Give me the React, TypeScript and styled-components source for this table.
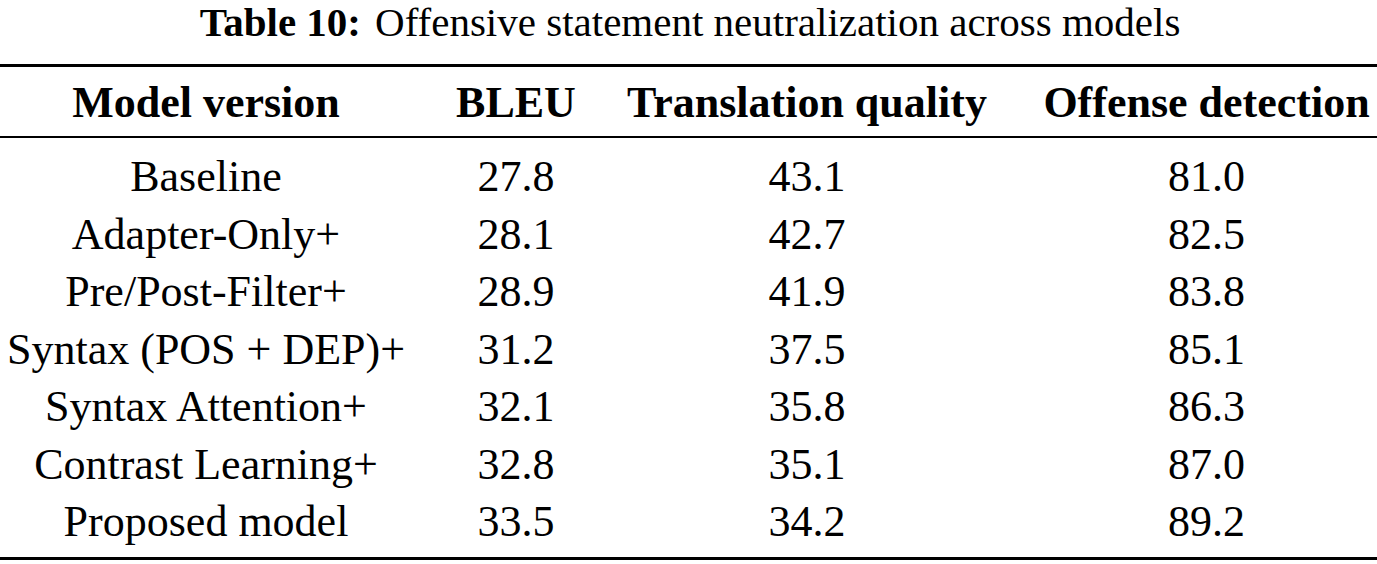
import React from 'react';
import styled, { createGlobalStyle } from 'styled-components';

interface Row {
  model: string;
  bleu: string;
  quality: string;
  offense: string;
}

const rows: Row[] = [
  { model: 'Baseline', bleu: '27.8', quality: '43.1', offense: '81.0' },
  { model: 'Adapter-Only+', bleu: '28.1', quality: '42.7', offense: '82.5' },
  { model: 'Pre/Post-Filter+', bleu: '28.9', quality: '41.9', offense: '83.8' },
  { model: 'Syntax (POS + DEP)+', bleu: '31.2', quality: '37.5', offense: '85.1' },
  { model: 'Syntax Attention+', bleu: '32.1', quality: '35.8', offense: '86.3' },
  { model: 'Contrast Learning+', bleu: '32.8', quality: '35.1', offense: '87.0' },
  { model: 'Proposed model', bleu: '33.5', quality: '34.2', offense: '89.2' },
];

const headers = ['Model version', 'BLEU', 'Translation quality', 'Offense detection'];

function App() {
  return (
    <>
      <GlobalStyle />
      <Page>
        <Caption>
          <CaptionLabel>Table 10:</CaptionLabel>
          <span>Offensive statement neutralization across models</span>
        </Caption>
        <Rule $weight={3} />
        <HeadRow>
          {headers.map((h, i) => (
            <HeadCell key={h} $col={i}>
              {h}
            </HeadCell>
          ))}
        </HeadRow>
        <Rule $weight={2} />
        <Body>
          {rows.map((r) => (
            <BodyRow key={r.model}>
              <Cell $col={0}>{r.model}</Cell>
              <Cell $col={1}>{r.bleu}</Cell>
              <Cell $col={2}>{r.quality}</Cell>
              <Cell $col={3}>{r.offense}</Cell>
            </BodyRow>
          ))}
        </Body>
        <Rule $weight={3} />
      </Page>
    </>
  );
}

export default App;

const GlobalStyle = createGlobalStyle`
  html, body {
    margin: 0;
    padding: 0;
    background: #fff;
  }
`;

const Page = styled.div`
  width: 1377px;
  height: 564px;
  overflow: hidden;
  display: flex;
  flex-direction: column;
  font-family: 'Liberation Serif', 'DejaVu Serif', serif;
  color: #000;
`;

// caption sits flush with the top edge, rule below at 64px
const Caption = styled.div`
  height: 40px;
  line-height: 45px;
  font-size: 41px;
  text-align: center;
  white-space: nowrap;
  margin-bottom: 24px;
  padding-left: 3px;
`;

const CaptionLabel = styled.b`
  font-weight: 700;
  margin-right: 14px;
`;

const Rule = styled.div<{ $weight: number }>`
  height: ${(p) => p.$weight}px;
  background: #000;
  flex: 0 0 auto;
`;

const columns = '412px 208px 374px 1fr';

const HeadRow = styled.div`
  display: grid;
  grid-template-columns: ${columns};
  padding: 7px 0 4.5px;
`;

const Body = styled.div`
  display: flex;
  flex-direction: column;
  padding: 10px 0 6px;
`;

const BodyRow = styled.div`
  display: grid;
  grid-template-columns: ${columns};
`;

const Cell = styled.div<{ $col: number }>`
  font-size: 44px;
  line-height: 57.5px;
  text-align: center;
  white-space: nowrap;
  padding-left: ${(p) => (p.$col === 3 ? '42px' : '0')};
`;

const HeadCell = styled(Cell)`
  font-weight: 700;
`;
